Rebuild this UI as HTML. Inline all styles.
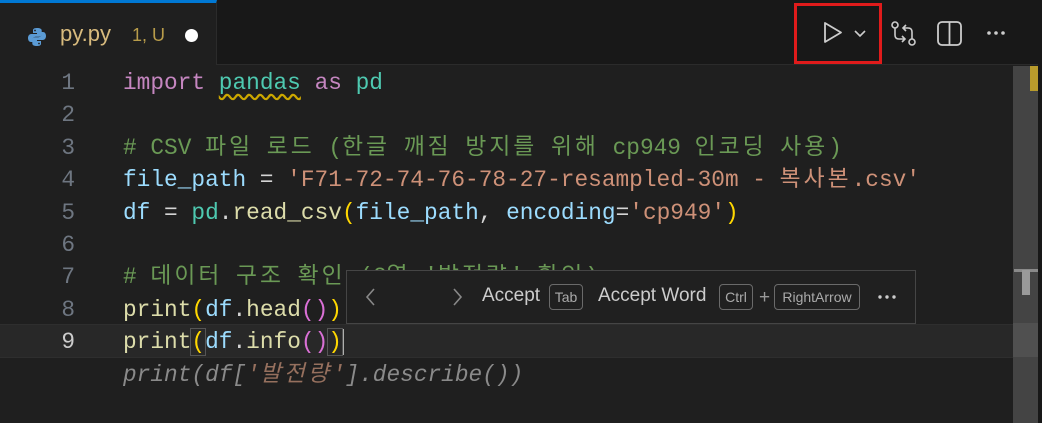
<!DOCTYPE html>
<html><head><meta charset="utf-8"><style>
body{margin:0;width:1042px;height:423px;background:#1f1f1f;overflow:hidden;position:relative;font-family:"Liberation Sans","Noto Sans CJK KR",sans-serif}
.tabbar{position:absolute;left:0;top:0;width:1042px;height:65px;background:#181818;border-bottom:1px solid #2b2b2b;box-sizing:border-box}
.tab{position:absolute;left:0;top:0;width:217px;height:65px;background:#1f1f1f;border-top:3px solid #0078d4;box-sizing:border-box;border-right:1px solid #2b2b2b}
.tab .n{position:absolute;left:60px;top:18px;font-size:22px;color:#d7ba7d}
.tab .s{position:absolute;left:132px;top:22px;font-size:18px;color:#b89c4a}
.tab .dot{position:absolute;left:185px;top:26px;width:13px;height:13px;border-radius:50%;background:#fff}
.code{position:absolute;left:0;top:67px;font-family:"Liberation Mono","Noto Sans CJK KR",monospace;font-size:22.8px;white-space:pre}
.ln{position:absolute;left:30px;width:45px;text-align:right;color:#6e7681;height:32.4px;line-height:32.4px}
.l{position:absolute;left:123px;height:32.4px;line-height:32.4px;color:#d4d4d4}
.h{letter-spacing:3px}
.k{color:#c586c0}.m{color:#4ec9b0}.c{color:#6a9955}.v{color:#9cdcfe}.s{color:#ce9178}.f{color:#dcdcaa}.y{color:#ffd700}.p{color:#da70d6}
.cur{position:absolute;left:0;top:324px;width:1013px;height:34px;background:#282828;border-top:1px solid #2e2e2e;border-bottom:1px solid #2e2e2e;box-sizing:border-box}
.widget{position:absolute;left:346px;top:270px;width:570px;height:54px;background:#202020;border:1px solid #454545;box-sizing:border-box;color:#ccc;font-size:19px}
.kb{position:absolute;top:13px;height:26px;border:1px solid #6a6a6a;border-radius:4px;font-size:14px;line-height:24px;color:#aaa;text-align:center;box-sizing:border-box}
.sb{position:absolute;left:1013px;top:66px;width:25px;height:357px;background:#444}
</style></head><body>
<div class="tabbar">
 <div class="tab">
  <svg style="position:absolute;left:27px;top:24px" width="20" height="20" viewBox="0 0 20 20"><path d="M9.8 1C6 1 6 2.7 6 3.5V6h4v1H4.3C2.5 7 1 8.5 1 11s1.3 4 3 4h1.5v-2.3c0-1.6 1.4-3 3-3h3.8c1.3 0 2.4-1.1 2.4-2.4V3.5C14.7 2 13.3 1 9.8 1z" fill="#5b9bd5"/><path d="M10.2 19c3.8 0 3.8-1.7 3.8-2.5V14h-4v-1h5.7c1.8 0 3.3-1.5 3.3-4s-1.3-4-3-4h-1.5v2.3c0 1.6-1.4 3-3 3H7.7c-1.3 0-2.4 1.1-2.4 2.4v3.8C5.3 18 6.7 19 10.2 19z" fill="#5b9bd5"/><circle cx="8" cy="3.5" r="0.9" fill="#1f1f1f"/><circle cx="12" cy="16.5" r="0.9" fill="#1f1f1f"/></svg>
  <span class="n">py.py</span><span class="s">1, U</span><span class="dot"></span>
 </div>
 <div style="position:absolute;left:794px;top:3px;width:88px;height:61px;border:3px solid #e01b1b;box-sizing:border-box"></div>
 <svg style="position:absolute;left:820px;top:20px" width="60" height="28" viewBox="0 0 60 28"><path d="M5 3v19l16-9.5z" fill="none" stroke="#ccc" stroke-width="1.8" stroke-linejoin="round"/><path d="M35 11l5 5 5-5" fill="none" stroke="#ccc" stroke-width="1.6"/></svg>
 <svg style="position:absolute;left:890px;top:20px" width="30" height="28" viewBox="0 0 30 28"><circle cx="5" cy="5" r="3" fill="none" stroke="#ccc" stroke-width="1.6"/><circle cx="22" cy="22" r="3" fill="none" stroke="#ccc" stroke-width="1.6"/><path d="M5 8v7q0 4 4 4h6M12 16l3 3-3 3M22 19v-7q0-4-4-4h-5M16 5l-3 3 3 3" fill="none" stroke="#ccc" stroke-width="1.6"/></svg>
 <svg style="position:absolute;left:936px;top:20px" width="28" height="28" viewBox="0 0 28 28"><rect x="2" y="2" width="23" height="23" rx="4" fill="none" stroke="#ccc" stroke-width="1.8"/><path d="M13.5 2v23" stroke="#ccc" stroke-width="1.8"/></svg>
 <svg style="position:absolute;left:985px;top:28px" width="24" height="10"><circle cx="4" cy="5" r="1.8" fill="#ccc"/><circle cx="11" cy="5" r="1.8" fill="#ccc"/><circle cx="18" cy="5" r="1.8" fill="#ccc"/></svg>
</div>
<div class="cur"></div>
<div class="code">
<div class="ln" style="top:0">1</div><div class="l" style="top:0"><span class="k">import</span> <span class="m" style="text-decoration:underline wavy #cca700;text-underline-offset:4px">pandas</span> <span class="k">as</span> <span class="m">pd</span></div>
<div class="ln" style="top:32.4px">2</div>
<div class="ln" style="top:64.8px">3</div><div class="l c" style="top:64.8px"># CSV <span class="h">파일</span> <span class="h">로드</span> (<span class="h">한글</span> <span class="h">깨짐</span> <span class="h">방지를</span> <span class="h">위해</span> cp949 <span class="h">인코딩</span> <span class="h">사용</span>)</div>
<div class="ln" style="top:97.2px">4</div><div class="l" style="top:97.2px"><span class="v">file_path</span> = <span class="s">'F71-72-74-76-78-27-resampled-30m - <span class="h">복사본</span>.csv'</span></div>
<div class="ln" style="top:129.6px">5</div><div class="l" style="top:129.6px"><span class="v">df</span> = <span class="m">pd</span>.<span class="f">read_csv</span><span class="y">(</span><span class="v">file_path</span>, <span class="v">encoding</span>=<span class="s">'cp949'</span><span class="y">)</span></div>
<div class="ln" style="top:162px">6</div>
<div class="ln" style="top:194.4px">7</div><div class="l c" style="top:194.4px"># <span class="h">데이터</span> <span class="h">구조</span> <span class="h">확인</span> (2<span class="h">열</span> '<span class="h">발전량</span>' <span class="h">확인</span>)</div>
<div class="ln" style="top:226.8px">8</div><div class="l" style="top:226.8px"><span class="f">print</span><span class="y">(</span><span class="v">df</span>.<span class="f">head</span><span class="p">()</span><span class="y">)</span></div>
<div class="ln" style="top:259.2px;color:#ccc">9</div><div class="l" style="top:259.2px"><span class="f">print</span><span class="y" style="outline:1px solid #555">(</span><span class="v">df</span>.<span class="f">info</span><span class="p">()</span><span class="y" style="outline:1px solid #555">)</span><span style="display:inline-block;width:2px;height:26px;background:#aeafad;vertical-align:middle"></span></div>
<div class="l" style="top:291.6px;font-style:italic;color:#8a8a8a">print(df[<span style="color:#96705e">'<span class="h">발전량</span>'</span>].describe())</div>
</div>
<div class="widget">
 <svg style="position:absolute;left:18px;top:16px" width="12" height="20"><path d="M9 2L2 10l7 8" fill="none" stroke="#888" stroke-width="1.6"/></svg>
 <svg style="position:absolute;left:104px;top:16px" width="12" height="20"><path d="M3 2l7 8-7 8" fill="none" stroke="#888" stroke-width="1.6"/></svg>
 <span style="position:absolute;left:135px;top:14px">Accept</span>
 <span class="kb" style="left:202px;width:34px">Tab</span>
 <span style="position:absolute;left:251px;top:14px">Accept Word</span>
 <span class="kb" style="left:372px;width:34px">Ctrl</span>
 <span style="position:absolute;left:412px;top:16px;color:#999">+</span>
 <span class="kb" style="left:427px;width:86px">RightArrow</span>
 <svg style="position:absolute;left:530px;top:22px" width="22" height="8"><circle cx="3" cy="4" r="1.7" fill="#ccc"/><circle cx="10" cy="4" r="1.7" fill="#ccc"/><circle cx="17" cy="4" r="1.7" fill="#ccc"/></svg>
</div>
<div class="sb"></div>
<div style="position:absolute;left:1013px;top:323px;width:25px;height:34px;background:#505050"></div>
<div style="position:absolute;left:1030px;top:66px;width:8px;height:25px;background:#b89b2c"></div>
<div style="position:absolute;left:1014px;top:269px;width:24px;height:3px;background:#8a8a8a"></div>
<div style="position:absolute;left:1022px;top:270px;width:8px;height:25px;background:#9a9a9a"></div>
<div style="position:absolute;left:1038px;top:0;width:4px;height:423px;background:#181818"></div>
</body></html>
